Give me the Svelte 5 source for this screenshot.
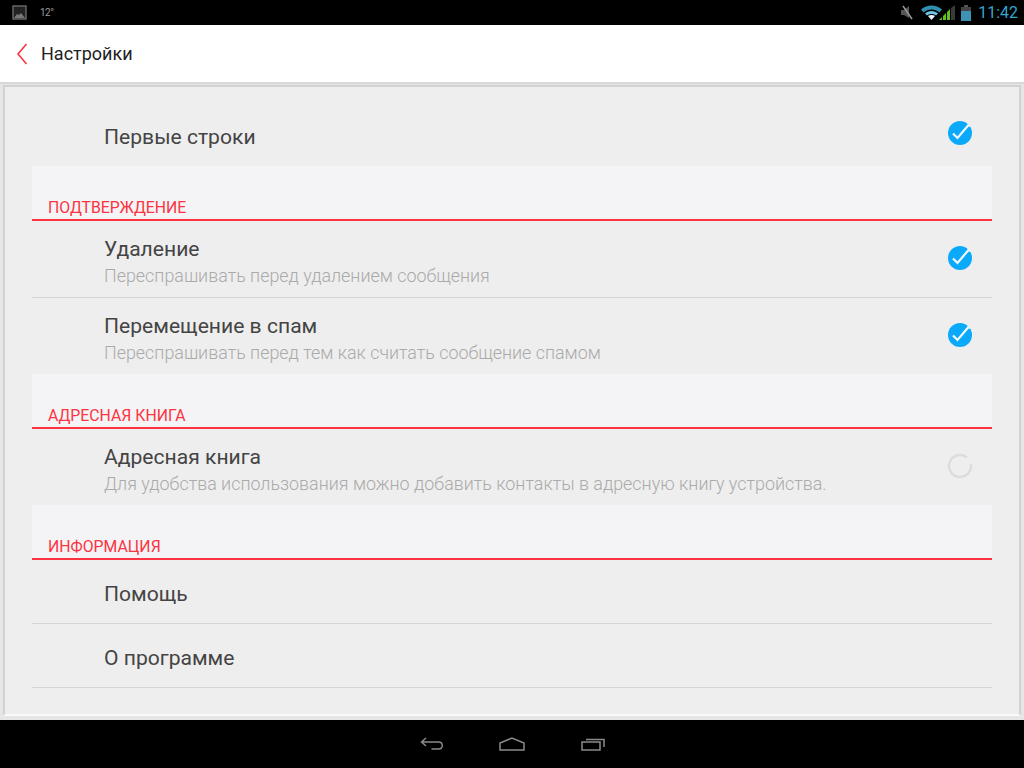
<script>
    const tick = "M6 13.500l4.500 4.500L21.500 5";
</script>

<main>
    <div class="statusbar">
        <div class="status-left">
            <svg width="16" height="15" viewBox="0 0 16 15">
                <rect x="1" y="1" width="13" height="13" fill="#222" stroke="#666" stroke-width="1.500" />
                <path d="M2 13l3-4 2 1 2-2 4 5z" fill="#777" />
            </svg>
            <span class="temp">12°</span>
        </div>
        <div class="status-right">
            <svg class="mute" width="14" height="15" viewBox="0 0 14 15">
                <path d="M1 5h3l5-4v12l-5-3H1z" fill="#555" />
                <path d="M3 1l9 13" stroke="#999" stroke-width="1.500" />
            </svg>
            <svg class="wifi" width="21" height="15" viewBox="0 0 21 15">
                <path d="M0 4.500C6 -1 15 -1 21 4.500L18.500 7.500C14 3.500 7 3.500 2.500 7.500z" fill="#2f8fb0" />
                <path d="M4 8.500C7.500 5 13.500 5 17 8.500L15 10.500C12.500 8.500 8.500 8.500 6 10.500z" fill="#6cc6e6" />
                <path d="M7 11C9 9.500 12 9.500 14 11L10.500 15z" fill="#e8f6fb" />
            </svg>
            <svg class="signal" width="16" height="15" viewBox="0 0 16 15">
                <path d="M0 15L3 12V15zM4 15V11L7 8V15zM8 15V7L11 4V15z" fill="#5fc51e" />
                <path d="M12 15V3L16 0V15z" fill="#3a3a3a" />
            </svg>
            <svg class="battery" width="10" height="16" viewBox="0 0 10 16">
                <rect x="3" y="0" width="4" height="2" fill="#555" />
                <rect x="0" y="2" width="10" height="4" fill="#444" />
                <rect x="0" y="6" width="10" height="10" fill="#3d93b3" />
            </svg>
            <span class="clock">11:42</span>
        </div>
    </div>

    <header class="topbar">
        <svg width="12" height="22" viewBox="0 0 12 22">
            <path d="M10.500 1L2 11l8.500 10" fill="none" stroke="#fc3340" stroke-width="1.600" />
        </svg>
        <h1>Настройки</h1>
    </header>

    <div class="content">
        <div class="panel">
            <div class="row first">
                <span class="title">Первые строки</span>
                <svg class="check" width="26" height="26" viewBox="0 0 26 26">
                    <circle cx="13" cy="13" r="12" fill="#0aa9fa" />
                    <path d="M19 1l6-1v6l-3 1z" fill="#eeeeee" />
                    <path d={tick} fill="none" stroke="#f2f9fd" stroke-width="2.200" />
                </svg>
            </div>

            <div class="section">ПОДТВЕРЖДЕНИЕ</div>
            <div class="row double border">
                <div class="texts">
                    <span class="title">Удаление</span>
                    <span class="sub">Переспрашивать перед удалением сообщения</span>
                </div>
                <svg class="state" width="26" height="26" viewBox="0 0 26 26">
                    <circle cx="13" cy="13" r="12" fill="#0aa9fa" />
                    <path d="M19 1l6-1v6l-3 1z" fill="#eeeeee" />
                    <path d={tick} fill="none" stroke="#f2f9fd" stroke-width="2.200" />
                </svg>
            </div>
            <div class="row double">
                <div class="texts">
                    <span class="title">Перемещение в спам</span>
                    <span class="sub">Переспрашивать перед тем как считать сообщение спамом</span>
                </div>
                <svg class="state" width="26" height="26" viewBox="0 0 26 26">
                    <circle cx="13" cy="13" r="12" fill="#0aa9fa" />
                    <path d="M19 1l6-1v6l-3 1z" fill="#eeeeee" />
                    <path d={tick} fill="none" stroke="#f2f9fd" stroke-width="2.200" />
                </svg>
            </div>

            <div class="section">АДРЕСНАЯ КНИГА</div>
            <div class="row double">
                <div class="texts">
                    <span class="title">Адресная книга</span>
                    <span class="sub">Для удобства использования можно добавить контакты в адресную книгу устройства.</span>
                </div>
                <svg class="state" width="26" height="26" viewBox="0 0 26 26">
                    <path d="M23.830 11.090A11 11 0 1 1 20.070 4.570" fill="none" stroke="#dcdcdc" stroke-width="2.400" />
                </svg>
            </div>

            <div class="section">ИНФОРМАЦИЯ</div>
            <div class="row plain border"><span class="title">Помощь</span></div>
            <div class="row plain border"><span class="title">О программе</span></div>
        </div>
    </div>

    <div class="navbar">
        <svg width="26" height="14" viewBox="0 0 26 14">
            <path d="M6 1L1.500 5l4.500 4M1.500 5h17c5 0 5 7 0 7h-7" fill="none" stroke="#8a8a8a" stroke-width="1.500" />
        </svg>
        <svg width="26" height="14" viewBox="0 0 26 14">
            <path d="M1 13V6L13 1l12 5v7z" fill="none" stroke="#8a8a8a" stroke-width="1.500" />
        </svg>
        <svg class="recent" width="26" height="14" viewBox="0 0 26 14">
            <rect x="1" y="5" width="18" height="8" fill="none" stroke="#8a8a8a" stroke-width="1.500" />
            <path d="M5 2.500h18V10" fill="none" stroke="#8a8a8a" stroke-width="1.500" />
        </svg>
    </div>
</main>

<style>
    :global(body) {
        margin: 0;
        background: #000;
    }

    main {
        width: 1024px;
        height: 768px;
        display: flex;
        flex-direction: column;
        font-family: Roboto, "Liberation Sans", sans-serif;
        overflow: hidden;
    }

    .statusbar {
        height: 25px;
        background: #000;
        display: flex;
        justify-content: space-between;
        align-items: center;
        padding: 0 6px 0 12px;
        flex: none;
    }

    .status-left,
    .status-right {
        display: flex;
        align-items: center;
    }

    .status-left {
        gap: 12px;
    }

    .temp {
        color: #999;
        font-size: 10px;
        letter-spacing: -0.5px;
    }

    .mute {
        margin-right: 7px;
    }

    .signal {
        margin-left: -3px;
    }

    .battery {
        margin-left: 6px;
    }

    .clock {
        color: #33a5d0;
        font-size: 16px;
        margin-left: 7px;
    }

    .topbar {
        height: 57px;
        background: #fff;
        display: flex;
        align-items: center;
        padding-left: 16px;
        gap: 13px;
        flex: none;
    }

    h1 {
        margin: 0;
        font-size: 18px;
        font-weight: 400;
        color: #222;
    }

    .content {
        height: 638px;
        background: #e6e6e6;
        border-top: 2px solid #d8d8d8;
        box-sizing: border-box;
        padding: 1px 3px 4px;
        flex: none;
    }

    .panel {
        height: 100%;
        box-sizing: border-box;
        background: #eeeeee;
        border: 2px solid #d2d2d2;
        border-bottom-color: #f8f8f8;
        padding: 0 27px;
        display: flex;
        flex-direction: column;
    }

    .row {
        display: flex;
        align-items: center;
        justify-content: space-between;
        padding: 0 19px 0 72px;
        box-sizing: border-box;
    }

    .first {
        height: 79px;
        padding-top: 20px;
    }

    .check {
        margin-top: -7px;
    }

    .state {
        margin-top: -2px;
    }

    .double {
        height: 76px;
    }

    .double.border {
        height: 77px;
    }

    .plain {
        height: 64px;
        padding-top: 4px;
    }

    .border {
        border-bottom: 1px solid #d4d4d4;
    }

    .texts {
        display: flex;
        flex-direction: column;
        gap: 5px;
        padding-top: 4px;
    }

    .title {
        font-size: 21.100px;
        color: #444;
        line-height: 24px;
    }

    .sub {
        font-size: 17.900px;
        font-weight: 300;
        color: #aaa;
        line-height: 20px;
    }

    .section {
        height: 55px;
        box-sizing: border-box;
        background: #f4f4f7;
        border-bottom: 2px solid #fc3340;
        color: #fc3340;
        font-size: 15.800px;
        padding-left: 16px;
        padding-bottom: 1px;
        display: flex;
        align-items: flex-end;
        line-height: 20px;
        flex: none;
    }

    .navbar {
        flex: 1;
        background: #000;
        display: flex;
        justify-content: center;
        align-items: center;
        padding-left: 2px;
        gap: 53px;
    }

    .recent {
        margin-left: 3px;
    }
</style>
